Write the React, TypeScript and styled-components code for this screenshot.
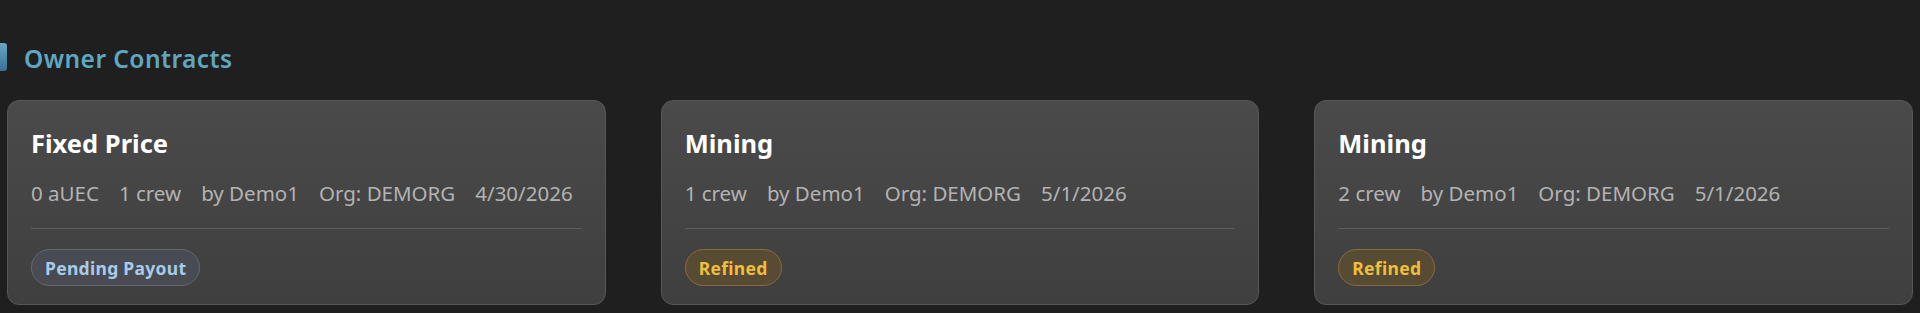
import React from "react";
import styled, { createGlobalStyle } from "styled-components";

const Global = createGlobalStyle`
  html, body {
    margin: 0;
    padding: 0;
    background: #1f1f1f;
    font-family: "Noto Sans", "Open Sans", sans-serif;
  }
`;

const Page = styled.div`
  padding: 43px 0 0;
  background: #1f1f1f;
  min-height: 313px;
  box-sizing: border-box;
`;

const Header = styled.div`
  display: flex;
  align-items: flex-start;
  gap: 17px;
  height: 28px;
`;

const Accent = styled.div`
  width: 7px;
  height: 28px;
  border-radius: 0 3px 3px 0;
  background: linear-gradient(180deg, #6aa6c4 0%, #4a86a8 60%, #3c7094 100%);
`;

const Title = styled.h2`
  margin: 0;
  padding-top: 2px;
  font-size: 24.5px;
  font-weight: 600;
  color: #5fa7c1;
  line-height: 28px;
  letter-spacing: 0.45px;
`;

const Grid = styled.div`
  display: grid;
  grid-template-columns: repeat(3, 1fr);
  gap: 55px;
  padding: 0 7px;
  margin-top: 29px;
`;

const Card = styled.div`
  box-sizing: border-box;
  height: 205px;
  border-radius: 12px;
  border: 1px solid #575757;
  background: linear-gradient(180deg, #4a4a4a 0%, #3f3f3f 100%);
  padding: 26px 23px 0;
  display: flex;
  flex-direction: column;
`;

const CardTitle = styled.div`
  font-size: 25.5px;
  font-weight: 700;
  color: #ffffff;
  line-height: 32px;
`;

const Meta = styled.div`
  display: flex;
  gap: 20px;
  margin-top: 22px;
  font-size: 20.5px;
  line-height: 24px;
  color: #b3b3b3;
  white-space: nowrap;
`;

const Divider = styled.div`
  height: 1px;
  background: #5c5c5c;
  margin-top: 23px;
`;

const Badge = styled.span<{ $tone: "blue" | "gold" }>`
  align-self: flex-start;
  margin-top: 20px;
  box-sizing: border-box;
  height: 37px;
  display: inline-flex;
  align-items: center;
  padding: 0 13px;
  border-radius: 999px;
  font-size: 17.5px;
  font-weight: 700;
  letter-spacing: 0.3px;
  color: ${(p) => (p.$tone === "blue" ? "#a9cbe9" : "#efbe3c")};
  background: ${(p) => (p.$tone === "blue" ? "#484b51" : "#584b33")};
  border: 1px solid ${(p) => (p.$tone === "blue" ? "#64686f" : "#8a6b3a")};
`;

type Contract = {
  title: string;
  meta: string[];
  status: string;
  tone: "blue" | "gold";
};

const contracts: Contract[] = [
  {
    title: "Fixed Price",
    meta: ["0 aUEC", "1 crew", "by Demo1", "Org: DEMORG", "4/30/2026"],
    status: "Pending Payout",
    tone: "blue",
  },
  {
    title: "Mining",
    meta: ["1 crew", "by Demo1", "Org: DEMORG", "5/1/2026"],
    status: "Refined",
    tone: "gold",
  },
  {
    title: "Mining",
    meta: ["2 crew", "by Demo1", "Org: DEMORG", "5/1/2026"],
    status: "Refined",
    tone: "gold",
  },
];

export default function App() {
  return (
    <>
      <Global />
      <Page>
        <Header>
          <Accent />
          <Title>Owner Contracts</Title>
        </Header>
        <Grid>
          {contracts.map((c, i) => (
            <Card key={i}>
              <CardTitle>{c.title}</CardTitle>
              <Meta>
                {c.meta.map((m, j) => (
                  <span key={j}>{m}</span>
                ))}
              </Meta>
              <Divider />
              <Badge $tone={c.tone}>{c.status}</Badge>
            </Card>
          ))}
        </Grid>
      </Page>
    </>
  );
}
